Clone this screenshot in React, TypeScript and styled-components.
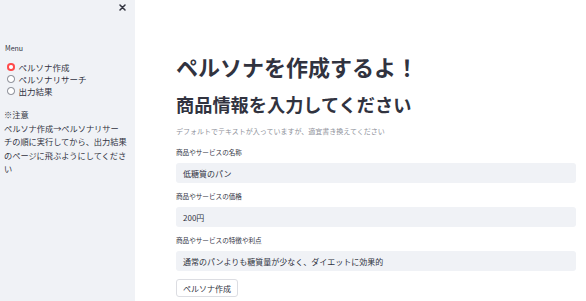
import styled, { createGlobalStyle } from "styled-components";

const GlobalStyle = createGlobalStyle`
  body {
    margin: 0;
    font-family: "Noto Sans CJK JP", "Noto Sans", sans-serif;
    color: #31333f;
    background: #ffffff;
  }
`;

const Page = styled.div`
  display: flex;
  width: 586px;
  height: 301px;
  overflow: hidden;
`;

const Sidebar = styled.aside`
  width: 135px;
  flex-shrink: 0;
  background: #f0f2f6;
  padding: 0 3px 0 4px;
  box-sizing: border-box;
  display: flex;
  flex-direction: column;
`;

const CloseRow = styled.div`
  display: flex;
  justify-content: flex-end;
  padding: 4px 6px 0 0;
  height: 39px;
`;

const MenuLabel = styled.div`
  font-size: 7px;
  line-height: 10px;
  margin: 0 0 8px 1px;
`;

const RadioRow = styled.label`
  display: flex;
  align-items: center;
  gap: 4px;
  font-size: 8.5px;
  line-height: 12px;
  padding-left: 3px;
`;

const RadioDot = styled.span<{ $on?: boolean }>`
  width: 7.5px;
  height: 7.5px;
  border-radius: 50%;
  box-sizing: border-box;
  border: ${(p) => (p.$on ? "2px solid #ff4b4b" : "1px solid #7d808a")};
  background: #ffffff;
`;

const Note = styled.div`
  margin-top: 11px;
  font-size: 8.2px;
  line-height: 13.5px;
  white-space: nowrap;
`;

const NoteLine = styled.div``;

const Main = styled.main`
  flex: 1;
  padding: 49px 10px 0 41px;
  display: flex;
  flex-direction: column;
`;

const Title = styled.h1`
  margin: 0;
  font-size: 22px;
  line-height: 34px;
  font-weight: 700;
`;

const SubTitle = styled.h2`
  margin: 7px 0 0;
  font-size: 18.2px;
  line-height: 28px;
  font-weight: 700;
`;

const Hint = styled.p`
  margin: 7px 0 0;
  font-size: 7px;
  line-height: 12px;
  color: #8f929b;
`;

const FieldLabel = styled.div`
  margin-top: 8px;
  font-size: 6.6px;
  line-height: 10px;
`;

const InputBox = styled.div`
  margin-top: 6px;
  height: 20px;
  background: #f0f2f6;
  border-radius: 3px;
  display: flex;
  align-items: center;
  padding-left: 7px;
  font-size: 8px;
`;

const Fields = styled.div`
  margin-top: 2px;
`;

const Button = styled.button`
  align-self: flex-start;
  margin-top: 8px;
  height: 18px;
  padding: 0 6px;
  background: #ffffff;
  border: 1px solid #dcdde2;
  border-radius: 3px;
  font-family: inherit;
  font-size: 8px;
  color: #31333f;
`;

const fields = [
  { label: "商品やサービスの名称", value: "低糖質のパン" },
  { label: "商品やサービスの価格", value: "200円" },
  { label: "商品やサービスの特徴や利点", value: "通常のパンよりも糖質量が少なく、ダイエットに効果的" },
];

const noteLines = [
  "※注意",
  "ペルソナ作成→ペルソナリサー",
  "チの順に実行してから、出力結果",
  "のページに飛ぶようにしてくださ",
  "い",
];

export default function App() {
  return (
    <Page>
      <GlobalStyle />
      <Sidebar>
        <CloseRow>
          <svg width="7" height="7" viewBox="0 0 7 7">
            <path d="M1 1L6 6M6 1L1 6" stroke="#31333f" strokeWidth="1.5" strokeLinecap="round" />
          </svg>
        </CloseRow>
        <MenuLabel>Menu</MenuLabel>
        <RadioRow>
          <RadioDot $on />
          ペルソナ作成
        </RadioRow>
        <RadioRow>
          <RadioDot />
          ペルソナリサーチ
        </RadioRow>
        <RadioRow>
          <RadioDot />
          出力結果
        </RadioRow>
        <Note>
          {noteLines.map((l) => (
            <NoteLine key={l}>{l}</NoteLine>
          ))}
        </Note>
      </Sidebar>
      <Main>
        <Title>ペルソナを作成するよ！</Title>
        <SubTitle>商品情報を入力してください</SubTitle>
        <Hint>デフォルトでテキストが入っていますが、適宜書き換えてください</Hint>
        <Fields>
          {fields.map((f) => (
            <div key={f.label}>
              <FieldLabel>{f.label}</FieldLabel>
              <InputBox>{f.value}</InputBox>
            </div>
          ))}
        </Fields>
        <Button>ペルソナ作成</Button>
      </Main>
    </Page>
  );
}
